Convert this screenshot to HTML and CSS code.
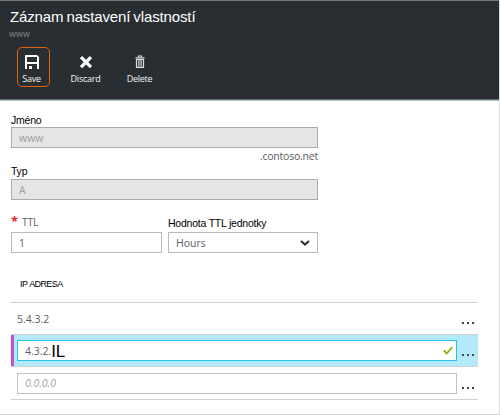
FILE: index.html
```html
<!DOCTYPE html>
<html lang="cs">
<head>
<meta charset="utf-8">
<title>Záznam nastavení vlastností</title>
<link rel="stylesheet" href="styles.css">
</head>
<body>
<main class="blade">
  <header class="header">
    <h1 class="title">Záznam nastavení vlastností</h1>
    <div class="subtitle">www</div>
    <nav class="toolbar">
      <button class="command command-active">
        <svg width="16" height="16" viewBox="0 0 16 16"><path fill="#fff" fill-rule="evenodd" d="M1 1h12l2 2v12h-2v-5H3v5H1zM3 3v5h10V3zM5 12h3v3H5z"/></svg>
        <span>Save</span>
      </button>
      <button class="command">
        <svg width="16" height="16" viewBox="0 0 16 16"><path stroke="#fff" stroke-width="3.200" d="M3 3.200l10 10M13 3.200l-10 10"/></svg>
        <span>Discard</span>
      </button>
      <button class="command">
        <svg width="16" height="16" viewBox="0 0 16 16"><path fill="none" stroke="#ddd" stroke-width="1.200" d="M6.500 3V2h3v1M3.500 3.800h9M4.500 5v8.400h7V5M6.900 5.500v7M9.100 5.500v7M4 5.500h8"/></svg>
        <span>Delete</span>
      </button>
    </nav>
  </header>
  <section class="form">
    <div class="label name-label">Jméno</div>
    <div class="field disabled">www</div>
    <div class="suffix"><span>.contoso.net</span></div>
    <div class="label type-label">Typ</div>
    <div class="field disabled">A</div>
    <div class="ttl">
      <div class="ttl-value">
        <div class="label ttl-label"><b class="required">*</b><span>TTL</span></div>
        <div class="field">1</div>
      </div>
      <div class="ttl-unit">
        <div class="label unit-label">Hodnota TTL jednotky</div>
        <div class="field select"><span>Hours</span><svg width="10" height="8" viewBox="0 0 10 8"><path fill="none" stroke="#333" stroke-width="2.200" d="M1 2l4 3.500L9 2"/></svg></div>
      </div>
    </div>
  </section>
  <section class="records">
    <div class="records-head">IP ADRESA</div>
    <div class="row"><span class="address">5.4.3.2</span><span class="more"><i></i><i></i><i></i></span></div>
    <div class="row selected">
      <div class="entry"><span>4.3.2.</span><span class="typed">IL</span><svg class="check" width="10" height="9" viewBox="0 0 10 9"><path fill="none" stroke="#7fba00" stroke-width="1.800" d="M.8 4.500l3 3L9.200 1"/></svg></div>
      <span class="more"><i></i><i></i><i></i></span>
    </div>
    <div class="row"><div class="entry empty">0.0.0.0</div><span class="more"><i></i><i></i><i></i></span></div>
  </section>
</main>
</body>
</html>
```
FILE: styles.css
```css
* { box-sizing: border-box; }
body {
  margin: 0;
  background: #fff;
  font-family: "Open Sans", "Noto Sans", sans-serif;
  color: #5c5c64;
}
.blade {
  width: 500px;
  height: 415px;
  border-right: 1px solid #dcdcdc;
  border-bottom: 1px solid #d5d5d5;
  overflow: hidden;
}
.header {
  height: 101px;
  padding-top: 7px;
  background: #292e32;
  border-top: 1px solid #74787b;
  border-bottom: 1px solid #b4c4cb;
  box-shadow: inset 0 -1px #626c74;
}
.title {
  margin: 0 0 0 10px;
  font: 400 15px/18px "Liberation Sans", sans-serif;
  letter-spacing: -.13px;
  word-spacing: -1px;
  color: #fff;
  white-space: nowrap;
}
.subtitle {
  margin-left: 9px;
  font-size: 9px;
  line-height: 16px;
  color: #85898c;
}
.toolbar {
  display: flex;
  gap: 21px;
  margin: 5px 0 0 17px;
}
.command {
  display: flex;
  flex-direction: column;
  align-items: center;
  justify-content: flex-start;
  width: 33px;
  height: 40px;
  padding: 6px 4px 0 0;
  border: 1px solid transparent;
  border-radius: 5px;
  background: none;
  color: #f4f4f4;
  font: 9px/14px "Open Sans", sans-serif;
  letter-spacing: -.25px;
}
.command-active { border-color: #e0620a; }
.command span { margin-top: 2px; white-space: nowrap; }
.form { width: 318px; padding: 12px 0 0 11px; }
.label {
  font: 10.500px/15px "Liberation Sans", sans-serif;
  letter-spacing: -.22px;
  color: #000;
  white-space: nowrap;
}
.name-label { height: 14px; line-height: 14px; }
.field {
  display: flex;
  align-items: center;
  height: 21px;
  padding: 0 7px;
  border: 1px solid #b9b9b9;
  background: #fff;
  font-size: 10.500px;
}
.disabled { background: #e5e5e5; border-color: #ababab; color: #a0a0a0; }
.suffix {
  height: 17px;
  font-size: 10.500px;
  line-height: 17px;
  letter-spacing: -.22px;
  text-align: right;
}
.type-label { height: 14px; line-height: 13px; }
.ttl { display: flex; gap: 6px; margin-top: 15px; }
.ttl-value { width: 151px; }
.ttl-unit { width: 150px; }
.ttl .label { height: 17px; line-height: 17px; }
.ttl-label {
  display: flex;
  gap: 4px;
  font-family: "Open Sans", sans-serif;
  color: #62626a;
}
.ttl-label span { line-height: 15px; }
.required { color: #e32238; font-size: 13px; line-height: 12px; }
.select { justify-content: space-between; }
.records { margin: 21px 21px 0 11px; }
.records-head {
  height: 28px;
  padding-left: 9px;
  font: 9px/20px "Liberation Sans", sans-serif;
  letter-spacing: -.6px;
  word-spacing: .6px;
  color: #000;
}
.row {
  display: flex;
  align-items: center;
  height: 32px;
  border-top: 1px solid #d0d0d0;
  padding: 0 4px 0 6px;
  font-size: 10.500px;
}
.row:last-child { height: 34px; border-bottom: 1px solid #d0d0d0; }
.selected { background: #b3ebfa; box-shadow: inset 3px 0 #c34fd6; }
.entry {
  display: flex;
  align-items: center;
  width: 440px;
  height: 21px;
  border: 1px solid #26c2f2;
  background: #fff;
  padding: 0 3px 0 7px;
}
.empty { border-color: #c2c2c2; color: #a2a2a2; font-style: italic; }
.typed {
  margin: 2px 0 0 0;
  font: 17px/18px "Liberation Sans", sans-serif;
  letter-spacing: -.3px;
  color: #000;
}
.check { margin-left: auto; }
.more { display: flex; gap: 3px; margin-left: auto; margin-top: 9px; }
.more i { width: 2px; height: 2px; background: #45454b; }
```
